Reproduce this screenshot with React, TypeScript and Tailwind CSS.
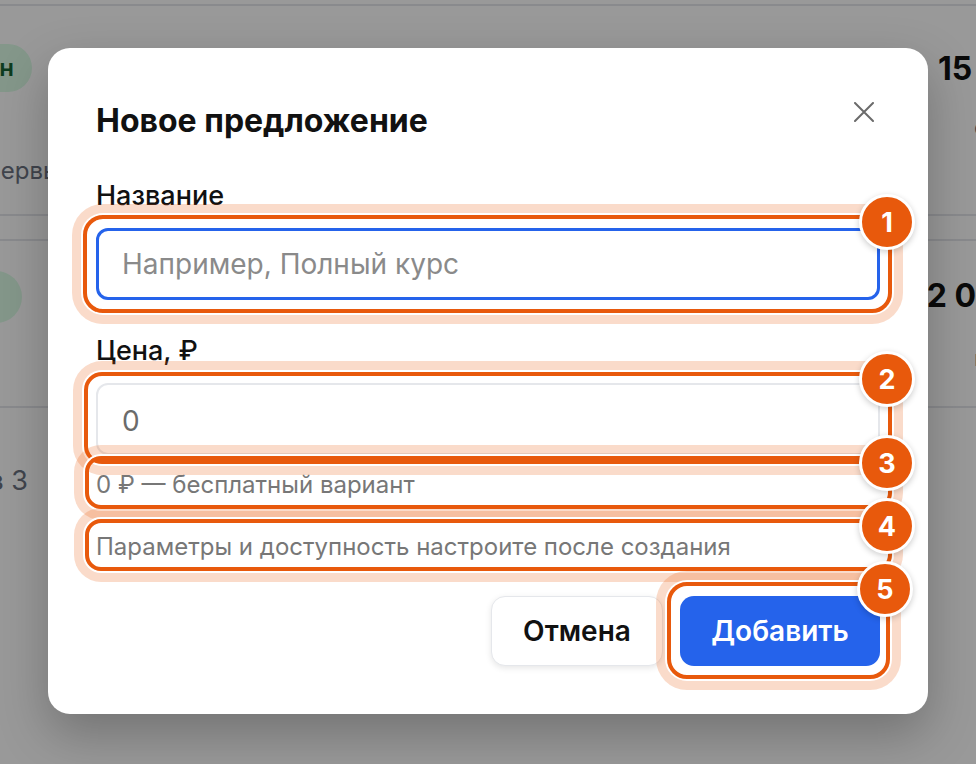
import React from 'react';

// orange callout frame with a numbered badge at its top-right corner
const Callout = ({ n, className }: { n: number; className: string }) => (
  <div
    className={`pointer-events-none absolute z-10 border-4 border-[#e8590c] shadow-[0_0_0_2px_#fff,0_0_0_11px_rgba(232,89,12,0.22)] ${className}`}
  >
    <span className="absolute -right-[27px] -top-[25px] flex h-[56px] w-[56px] items-center justify-center rounded-full border-[3px] border-white bg-[#e8590c] text-[27px] font-bold leading-none text-white shadow-[0_2px_6px_rgba(0,0,0,0.2)]">
      {n}
    </span>
  </div>
);

const BackgroundPage = () => (
  <div className="pt-[4px]">
    <div className="h-[2px] bg-[#e5e7eb]" />
    <div className="flex h-[208px] justify-between">
      <div className="flex w-[48px] flex-col">
        <div className="mt-[38px] flex w-[32px] justify-end">
          <span className="shrink-0 whitespace-nowrap rounded-full bg-[#dcfce7] py-[9px] pl-[20px] pr-[18px] text-[24px] font-semibold leading-[30px] text-[#166534]">
            Активен
          </span>
        </div>
        <span className="-ml-[17px] mt-[64px] whitespace-nowrap text-[24px] leading-[30px] text-[#6b7280]">
          Первый вариант
        </span>
      </div>
      <div className="flex w-[38px] flex-col whitespace-nowrap">
        <span className="mt-[44px] text-[32px] font-bold leading-[38px] text-[#111]">15 000 ₽</span>
        <span className="mt-[26px] pl-[36px] text-[22px] leading-[26px] text-[#6b7280]">единоразово</span>
      </div>
    </div>
    <div className="h-[2px] bg-[#e5e7eb]" />
    <div className="h-[23px]" />
    <div className="h-[2px] bg-[#e5e7eb]" />
    <div className="flex h-[165px] justify-between">
      <div className="flex w-[48px] flex-col">
        <div className="mt-[30px] flex w-[22px] justify-end">
          <span className="shrink-0 whitespace-nowrap rounded-full bg-[#dcfce7] py-[12px] pl-[20px] pr-[34px] text-[22px] font-semibold leading-[28px] text-[#166534]">
            Черновик
          </span>
        </div>
      </div>
      <div className="flex w-[63px] flex-col whitespace-nowrap">
        <span className="mt-[36px] text-[32px] font-bold leading-[38px] text-[#111]">12 000 ₽</span>
        <span className="mt-[30px] pl-[61px] text-[22px] leading-[26px] text-[#6b7280]">в месяц</span>
      </div>
    </div>
    <div className="h-[2px] bg-[#e5e7eb]" />
    <div className="mt-[58px] flex w-[28px] justify-end">
      <span className="shrink-0 whitespace-nowrap text-[27px] leading-[30px] text-[#6b7280]">Показано 2 из 3</span>
    </div>
  </div>
);

export default function App() {
  return (
    <div className="relative h-[764px] w-[976px] overflow-hidden bg-white font-['Inter','Noto_Sans',sans-serif]">
      <BackgroundPage />

      <div className="absolute inset-0 flex justify-center bg-black/40 pt-[48px]">
        <div className="h-fit w-[880px] rounded-[22px] bg-white px-12 pb-[48px] shadow-[0_20px_50px_rgba(0,0,0,0.25)]">
          <div className="flex items-start justify-between pt-[44px]">
            <h2 className="mt-[12px] text-[32px] font-bold leading-[34px] text-[#111]">Новое предложение</h2>
            <button className="-mr-[4px] flex h-10 w-10 items-center justify-center text-[#6b6b6b]">
              <svg width="20" height="20" viewBox="0 0 20 20" fill="none" stroke="currentColor" strokeWidth="2" strokeLinecap="round">
                <path d="M1 1 L19 19 M19 1 L1 19" />
              </svg>
            </button>
          </div>

          <label className="mt-[42px] block text-[27px] font-medium leading-[32px] text-[#111]">Название</label>
          <div className="relative mt-[16px]">
            <input
              placeholder="Например, Полный курс"
              className="h-[72px] w-full rounded-[12px] border-[3px] border-[#2563eb] bg-white px-[23px] text-[28px] text-[#111] outline-none placeholder:text-[#8a8a8a]"
            />
            <Callout n={1} className="-bottom-[13px] -left-[13px] -right-[12px] -top-[13px] rounded-[20px]" />
          </div>

          <label className="mt-[35px] block text-[27px] font-medium leading-[32px] text-[#111]">Цена, ₽</label>
          <div className="relative mt-[16px]">
            <input
              defaultValue="0"
              className="h-[72px] w-full rounded-[12px] border-2 border-[#e5e7eb] bg-white px-[24px] pt-[4px] text-[28px] text-[#6b6b6b] outline-none"
            />
            <Callout n={2} className="-bottom-[9px] -left-[12px] -right-[12px] -top-[11px] rounded-[18px]" />
          </div>

          <div className="relative mt-[15px]">
            <p className="text-[24px] leading-[30px] text-[#777]">0 ₽ — бесплатный вариант</p>
            <Callout n={3} className="-bottom-[9px] -left-[11px] -right-[12px] -top-[14px] rounded-[16px]" />
          </div>

          <div className="relative mt-[32px]">
            <p className="text-[24px] leading-[30px] text-[#777]">Параметры и доступность настроите после создания</p>
            <Callout n={4} className="-bottom-[9px] -left-[11px] -right-[12px] -top-[13px] rounded-[16px]" />
          </div>

          <div className="mt-[34px] flex justify-end gap-[17px]">
            <button className="h-[70px] w-[172px] rounded-[14px] border border-[#e5e7eb] bg-white text-[28px] font-semibold text-[#111] shadow-[0_2px_6px_rgba(0,0,0,0.1)]">
              Отмена
            </button>
            <div className="relative">
              <button className="h-[70px] w-[200px] rounded-[14px] bg-[#2563eb] text-[28px] font-semibold text-white">
                Добавить
              </button>
              <Callout n={5} className="-bottom-[13px] -left-[13px] -right-[10px] -top-[14px] rounded-[20px]" />
            </div>
          </div>
        </div>
      </div>
    </div>
  );
}
